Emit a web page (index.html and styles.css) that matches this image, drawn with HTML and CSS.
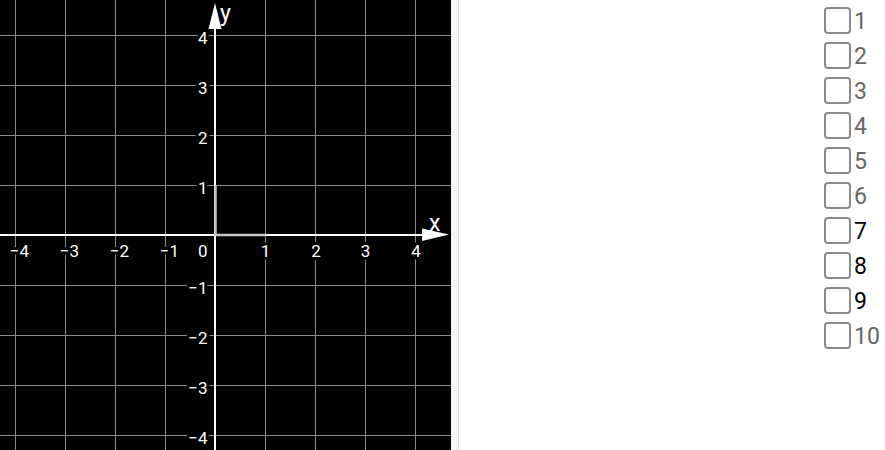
FILE: index.html
```html
<!DOCTYPE html>
<html>
<head>
<meta charset="utf-8">
<link rel="stylesheet" href="styles.css">
</head>
<body>
<div class="app">
  <div class="graph">
    <svg width="451" height="450" viewBox="0 0 451 450" xmlns="http://www.w3.org/2000/svg">
      <rect x="0" y="0" width="451" height="450" fill="#000"/>
      <g stroke="#8a8a8a" stroke-width="1">
        <line x1="15.5" y1="0" x2="15.5" y2="450"/>
        <line x1="65.5" y1="0" x2="65.5" y2="450"/>
        <line x1="115.5" y1="0" x2="115.5" y2="450"/>
        <line x1="165.5" y1="0" x2="165.5" y2="450"/>
        <line x1="265.5" y1="0" x2="265.5" y2="450"/>
        <line x1="315.5" y1="0" x2="315.5" y2="450"/>
        <line x1="365.5" y1="0" x2="365.5" y2="450"/>
        <line x1="415.5" y1="0" x2="415.5" y2="450"/>
        <line x1="0" y1="35.5" x2="451" y2="35.5"/>
        <line x1="0" y1="85.5" x2="451" y2="85.5"/>
        <line x1="0" y1="135.5" x2="451" y2="135.5"/>
        <line x1="0" y1="185.5" x2="451" y2="185.5"/>
        <line x1="0" y1="285.5" x2="451" y2="285.5"/>
        <line x1="0" y1="335.5" x2="451" y2="335.5"/>
        <line x1="0" y1="385.5" x2="451" y2="385.5"/>
        <line x1="0" y1="435.5" x2="451" y2="435.5"/>
      </g>
      <g class="lbl" text-anchor="middle">
        <text x="19.5" y="257">−4</text>
        <text x="69.5" y="257">−3</text>
        <text x="119.5" y="257">−2</text>
        <text x="169.5" y="257">−1</text>
        <text x="265.5" y="257">1</text>
        <text x="316" y="257">2</text>
        <text x="365.5" y="257">3</text>
        <text x="416" y="257">4</text>
      </g>
      <g class="lbl" text-anchor="end">
        <text x="207.5" y="257">0</text>
        <text x="207.5" y="43.5">4</text>
        <text x="207.5" y="93.5">3</text>
        <text x="207.5" y="143.5">2</text>
        <text x="207.5" y="193.5">1</text>
        <text x="207.5" y="293.5">−1</text>
        <text x="207.5" y="343.5">−2</text>
        <text x="207.5" y="393.5">−3</text>
        <text x="207.5" y="443.5">−4</text>
      </g>
      <line x1="0" y1="235" x2="430" y2="235" stroke="#fff" stroke-width="2"/>
      <line x1="215" y1="20" x2="215" y2="450" stroke="#fff" stroke-width="2"/>
      <polygon points="215,3 208.5,29 221.5,29" fill="#fff"/>
      <polygon points="449,234.5 422,228.5 422,241" fill="#fff"/>
      <line x1="215" y1="235" x2="265" y2="235" stroke="#c4c4c4" stroke-width="2.5"/>
      <line x1="215.5" y1="185" x2="215.5" y2="236" stroke="#c4c4c4" stroke-width="2.5"/>
      <text class="axname" x="429" y="231">x</text>
      <text class="axname" x="220" y="21">y</text>
    </svg>
  </div>
  <div class="strip"></div>
  <div class="panel">
    <ul class="checks">
      <li class="item"><span class="box"></span><span class="txt muted">1</span></li>
      <li class="item"><span class="box"></span><span class="txt muted">2</span></li>
      <li class="item"><span class="box"></span><span class="txt muted">3</span></li>
      <li class="item"><span class="box"></span><span class="txt muted">4</span></li>
      <li class="item"><span class="box"></span><span class="txt muted">5</span></li>
      <li class="item"><span class="box"></span><span class="txt muted">6</span></li>
      <li class="item"><span class="box"></span><span class="txt dark">7</span></li>
      <li class="item"><span class="box"></span><span class="txt dark">8</span></li>
      <li class="item"><span class="box"></span><span class="txt dark">9</span></li>
      <li class="item"><span class="box"></span><span class="txt muted">10</span></li>
    </ul>
  </div>
</div>
</body>
</html>
```

FILE: styles.css
```css
html, body {
  margin: 0;
  padding: 0;
  background: #fff;
  width: 885px;
  height: 450px;
  overflow: hidden;
  font-family: Roboto, "Liberation Sans", sans-serif;
}
.app {
  display: flex;
  width: 885px;
  height: 450px;
}
.graph {
  width: 451px;
  height: 450px;
  flex: none;
}
.graph svg {
  display: block;
}
.lbl text {
  font-family: Roboto, "Liberation Sans", sans-serif;
  font-size: 17px;
  fill: #fff;
  stroke: #000;
  stroke-width: 6px;
  paint-order: stroke;
  stroke-linejoin: round;
}
.axname {
  font-family: Roboto, "Liberation Sans", sans-serif;
  font-size: 23px;
  fill: #fff;
}
.strip {
  width: 7px;
  flex: none;
  background: #f6f6f6;
  border-right: 1px solid #dedede;
}
.panel {
  flex: 1;
  background: #fff;
}
.checks {
  list-style: none;
  margin: 0;
  padding: 7px 0 0 365px;
  display: flex;
  flex-direction: column;
  gap: 8px;
}
.item {
  display: flex;
  align-items: center;
  height: 27px;
}
.box {
  width: 23px;
  height: 23px;
  border: 2px solid #8a8a8a;
  border-radius: 4px;
  box-sizing: content-box;
  flex: none;
}
.txt {
  font-size: 23px;
  margin-left: 3px;
  line-height: 27px;
  padding-top: 2px;
}
.muted {
  color: #666;
}
.dark {
  color: #000;
}
```
